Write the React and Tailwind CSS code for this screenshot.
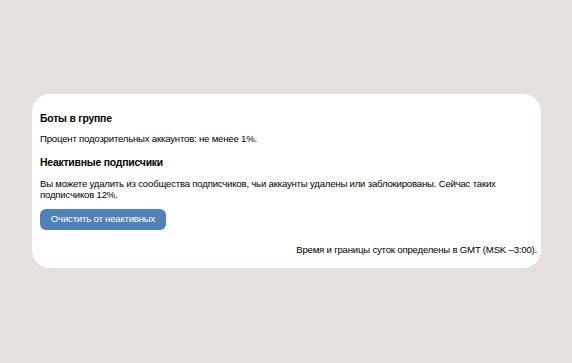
export default function App() {
  return (
    <div className="w-[572px] h-[363px] bg-[#e6e1df] pt-[94px] pl-[32px]" style={{ fontFamily: '"Liberation Sans", Arial, sans-serif' }}>
      <div className="w-[509px] h-[174px] bg-white rounded-[18px] pl-[8px] pr-[4px] pt-[18px] text-black flex flex-col">
        <div className="text-[10.4px] font-bold leading-[14px] tracking-[-0.2px]">Боты в группе</div>
        <div className="text-[9.6px] leading-[12px] tracking-[-0.2px] mt-[7px]">Процент подозрительных аккаунтов: не менее 1%.</div>
        <div className="text-[10.4px] font-bold leading-[14px] tracking-[-0.2px] mt-[11px]">Неактивные подписчики</div>
        <div className="text-[9.6px] leading-[11px] tracking-[-0.2px] mt-[8px] pr-[20px]">Вы можете удалить из сообщества подписчиков, чьи аккаунты удалены или заблокированы. Сейчас таких подписчиков 12%.</div>
        <div className="mt-[9px]">
          <button className="h-[21px] w-[126px] bg-[#5181b8] text-white text-[9.6px] tracking-[-0.2px] rounded-[6px] flex items-center justify-center">Очистить от неактивных</button>
        </div>
        <div className="text-[9.6px] leading-[12px] tracking-[-0.2px] text-right mt-[14px]">Время и границы суток определены в GMT (MSK –3:00).</div>
      </div>
    </div>
  );
}
